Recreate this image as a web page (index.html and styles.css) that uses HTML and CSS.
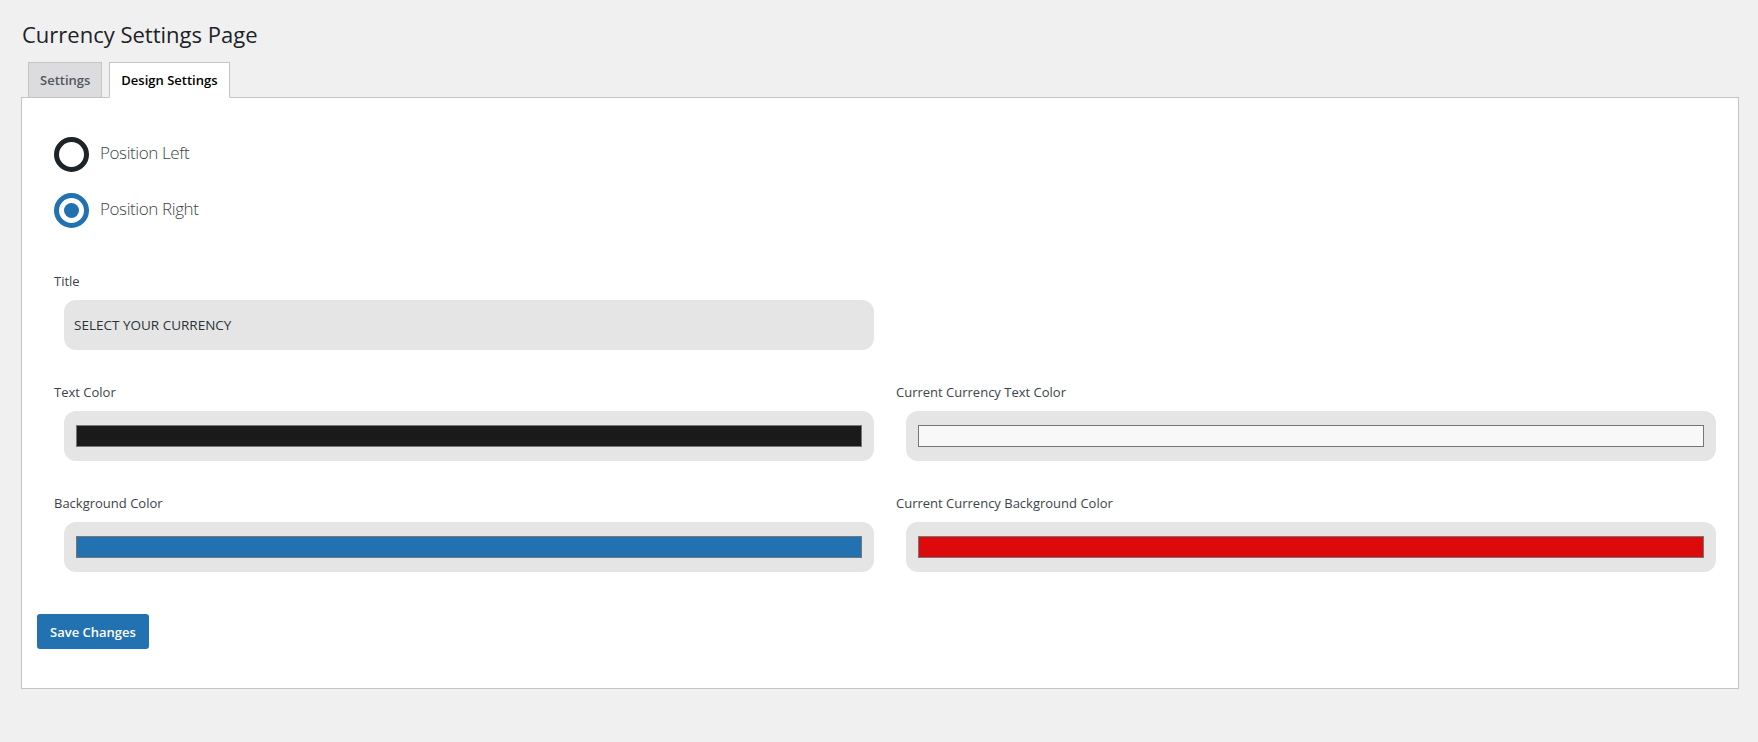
FILE: index.html
```html
<!DOCTYPE html>
<html lang="en">
<head>
<meta charset="utf-8">
<title>Currency Settings Page</title>
<link rel="stylesheet" href="styles.css">
</head>
<body>
<div class="wrap">
  <h1 class="page-title">Currency Settings Page</h1>
  <nav class="tabs">
    <a class="tab" href="#">Settings</a>
    <a class="tab tab--active" href="#">Design Settings</a>
  </nav>
  <div class="panel">
    <form class="design-form">
      <div class="radios">
        <label class="radio-row">
          <input class="radio" type="radio" name="position" value="left">
          <span class="radio-text">Position Left</span>
        </label>
        <label class="radio-row">
          <input class="radio" type="radio" name="position" value="right" checked>
          <span class="radio-text">Position Right</span>
        </label>
      </div>
      <div class="fields">
        <div class="field">
          <label class="field-label">Title</label>
          <input class="text-input" type="text" value="SELECT YOUR CURRENCY">
        </div>
        <div class="field field--empty"></div>
        <div class="field">
          <label class="field-label">Text Color</label>
          <div class="color-input"><span class="swatch swatch--black"></span></div>
        </div>
        <div class="field">
          <label class="field-label">Current Currency Text Color</label>
          <div class="color-input"><span class="swatch swatch--white"></span></div>
        </div>
        <div class="field">
          <label class="field-label">Background Color</label>
          <div class="color-input"><span class="swatch swatch--blue"></span></div>
        </div>
        <div class="field">
          <label class="field-label">Current Currency Background Color</label>
          <div class="color-input"><span class="swatch swatch--red"></span></div>
        </div>
      </div>
    </form>
    <div class="actions">
      <button class="button-primary" type="button">Save Changes</button>
    </div>
  </div>
</div>
</body>
</html>
```

FILE: styles.css
```css
* { box-sizing: border-box; }

html, body {
  margin: 0;
  padding: 0;
  background: #f0f0f1;
}

body {
  font-family: "Open Sans", "Noto Sans", sans-serif;
  color: #3c434a;
  font-size: 14px;
}

.wrap {
  padding: 0 19px 0 21px;
}

.page-title {
  margin: 0;
  padding: 19px 0 0 1px;
  font-size: 22px;
  font-weight: 400;
  line-height: 30px;
  color: #1d2327;
}

.tabs {
  display: flex;
  gap: 7px;
  padding: 13px 0 0 7px;
  margin-bottom: -1px;
}

.tab {
  position: relative;
  display: block;
  padding: 5px 11px 5px 11px;
  font-size: 13px;
  font-weight: 600;
  line-height: 24px;
  color: #50575e;
  text-decoration: none;
  background: #dcdcde;
  border: 1px solid #c3c4c7;
}

.tab--active {
  background: #fff;
  color: #000;
  border-bottom-color: #fff;
}

.panel {
  background: #fff;
  border: 1px solid #c3c4c7;
  padding: 39px 0 39px 15px;
}

.design-form {
  padding-left: 17px;
}

.radios {
  display: flex;
  flex-direction: column;
  gap: 21px;
}

.radio-row {
  display: flex;
  align-items: center;
  gap: 11px;
}

.radio {
  appearance: none;
  -webkit-appearance: none;
  margin: 0;
  width: 35px;
  height: 35px;
  border-radius: 50%;
  border: 5px solid #1d2327;
  background: #fff;
  display: grid;
  place-items: center;
  flex: none;
}

.radio:checked {
  border-color: #2271b1;
}

.radio:checked::before {
  content: "";
  width: 15px;
  height: 15px;
  border-radius: 50%;
  background: #2271b1;
}

.radio-text {
  font-size: 17px;
  font-weight: 300;
  letter-spacing: -0.4px;
  line-height: 24px;
  margin-bottom: 3px;
  color: #3c434a;
}

.fields {
  display: grid;
  grid-template-columns: 1fr 1fr;
  row-gap: 32px;
  margin-top: 43px;
}

.field-label {
  display: block;
  font-size: 13px;
  line-height: 20px;
  margin-bottom: 9px;
  color: #3c434a;
}

.text-input,
.color-input {
  display: block;
  width: 810px;
  height: 50px;
  margin-left: 10px;
  border: 0;
  border-radius: 12px;
  background: #e5e5e5;
}

.text-input {
  padding: 0 10px;
  font-family: inherit;
  font-size: 13.5px;
  color: #2c3338;
  outline: none;
}

.color-input {
  padding: 14px 12px;
}

.swatch {
  display: block;
  height: 22px;
  border: 1px solid #767676;
}

.swatch--black { background: #191a19; }
.swatch--white { background: #f8f8f8; }
.swatch--blue { background: #2271b1; }
.swatch--red { background: #dc0a0a; }

.actions {
  margin-top: 42px;
}

.button-primary {
  height: 35px;
  padding: 0 13px;
  border: 0;
  border-radius: 3px;
  background: #2271b1;
  color: #fff;
  font-family: inherit;
  font-size: 13px;
  font-weight: 600;
  cursor: pointer;
}
```
